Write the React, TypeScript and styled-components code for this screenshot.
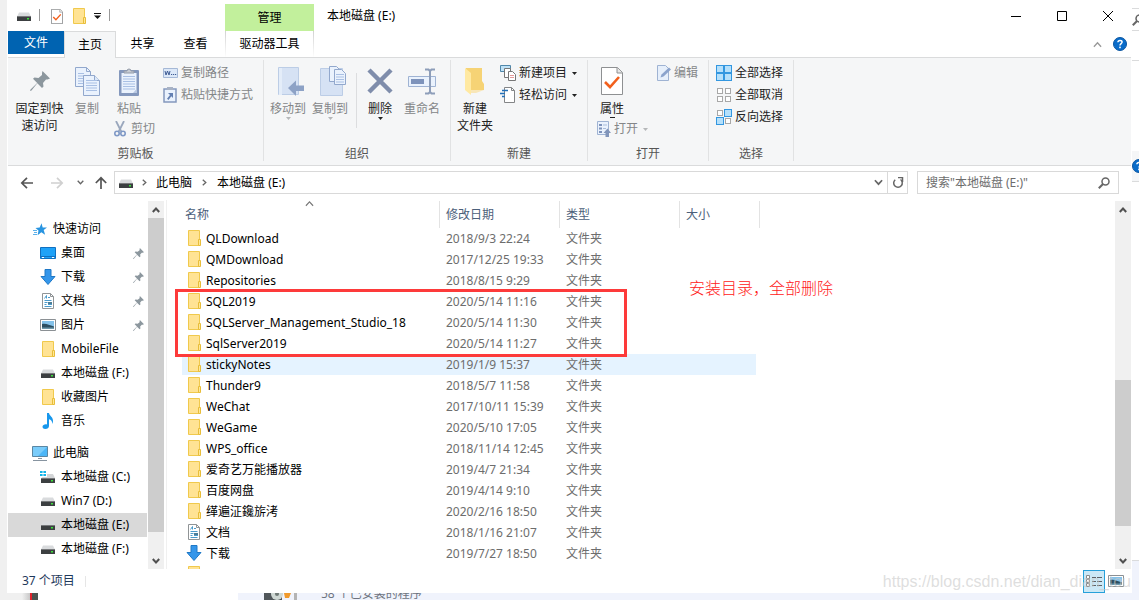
import React from "react";
import styled, { createGlobalStyle, css } from "styled-components";

const GlobalStyle = createGlobalStyle`
  * { box-sizing: border-box; }
  body {
    margin: 0;
    background: #fff;
    color: #000;
    font: 12px/16px "Noto Sans", "Noto Sans CJK SC", sans-serif;
  }
  button, input { font: inherit; color: inherit; }
  svg { display: block; flex: none; }
`;

const plainButton = css`
  border: 0;
  padding: 0;
  background: none;
  display: flex;
  align-items: center;
  white-space: nowrap;
`;

/* ---------- page frame ---------- */

const Desktop = styled.div`
  display: flex;
  flex-direction: column;
  height: 100vh;
  overflow: hidden;
`;

const Stage = styled.div`
  display: flex;
  flex: 1;
  min-height: 0;
`;

const LeftEdge = styled.div`
  width: 8px;
  flex: none;
  background: #f0f0f0;
  border-right: 1px solid #fff;
`;

const RightEdge = styled.div`
  width: 8px;
  flex: none;
  overflow: hidden;
  display: flex;
  flex-direction: column;
  border-left: 1px solid #fff;
`;

const EdgeBlock = styled.div<{ $h?: number; $bg?: string; $line?: boolean }>`
  height: ${(p) => (p.$h ? `${p.$h}px` : "auto")};
  flex: ${(p) => (p.$h ? "none" : 1)};
  background: ${(p) => p.$bg || "#fff"};
  border-bottom: ${(p) => (p.$line ? "1px solid #dadbdc" : "0")};
  overflow: hidden;
  display: flex;
  align-items: center;
`;

const Window = styled.div`
  flex: 1;
  min-width: 0;
  display: flex;
  flex-direction: column;
  position: relative;
  background: #fff;
`;

const Behind = styled.div`
  height: 7px;
  flex: none;
  display: flex;
  align-items: flex-end;
  overflow: hidden;
  background: #f0f0f0;
`;

const BehindLeft = styled.div`
  width: 238px;
  height: 7px;
  background: linear-gradient(90deg, #f0f0f0 22px, #c8c8c8 30px, #e0242c 30px, #e0242c 32px, #4a5450 32px, #4a5450 38px, #fff 38px);
`;

const BehindRight = styled.div`
  flex: 1;
  height: 7px;
  background: #f0f3fc;
  display: flex;
  align-items: flex-end;
  gap: 23px;
  padding-left: 25px;
  line-height: 12px;
  color: #6d7380;
`;

/* ---------- title bar and tabs ---------- */

const Header = styled.header`
  display: flex;
  height: 58px;
  border-bottom: 1px solid #dadbdc;
`;

const HeaderLeft = styled.div`
  width: 217px;
  display: flex;
  flex-direction: column;
`;

const QuickBar = styled.div`
  height: 31px;
  flex: none;
  display: flex;
  align-items: center;
  padding: 1px 0 0 9px;
`;

const QuickSep = styled.span`
  width: 1px;
  height: 12px;
  margin: 0 11px 2px 8px;
  background: #999;
`;

const QuickButton = styled.button<{ $w: number }>`
  ${plainButton}
  width: ${(p) => p.$w}px;
`;

const Tabs = styled.div`
  display: flex;
  flex: none;
  height: 27px;
`;

const Tab = styled.button<{ $kind?: "file" | "active" }>`
  ${plainButton}
  justify-content: center;
  width: 53px;
  height: 26px;
  ${(p) =>
    p.$kind === "file" &&
    css`
      width: 56px;
      height: 23px;
      background: #0063b1;
      color: #fff;
    `}
  ${(p) =>
    p.$kind === "active" &&
    css`
      width: 52px;
      height: 27px;
      background: #f5f6f7;
      border: 1px solid #dadbdc;
      border-bottom: 0;
    `}
`;

const ContextTab = styled.div`
  width: 89px;
  padding-top: 4px;
`;

const ContextTitle = styled.div`
  height: 27px;
  line-height: 28px;
  text-align: center;
  background: #c2f09c;
`;

const ContextButton = styled.button`
  ${plainButton}
  justify-content: center;
  width: 100%;
  height: 26px;
  border: solid;
  border-width: 0 1px;
  border-image: linear-gradient(#d0d0d0, #fff) 1;
`;

const HeaderRest = styled.div`
  flex: 1;
  display: flex;
  flex-direction: column;
`;

const TitleRow = styled.div`
  height: 31px;
  display: flex;
  align-items: center;
  justify-content: space-between;
  padding-left: 13px;
`;

const Title = styled.h1`
  margin: 0;
  font: inherit;
`;

const WindowButtons = styled.div`
  display: flex;
`;

const WindowButton = styled.button`
  ${plainButton}
  justify-content: center;
  width: 46px;
  height: 30px;
`;

const HelpRow = styled.div`
  display: flex;
  justify-content: flex-end;
  align-items: center;
  gap: 11px;
  height: 26px;
  padding-right: 4px;
`;

/* ---------- ribbon ---------- */

const Ribbon = styled.div`
  display: flex;
  height: 108px;
  background: #f5f6f7;
  border-bottom: 1px solid #dadbdc;
  color: #222;
`;

const Group = styled.section<{ $w: number }>`
  width: ${(p) => p.$w}px;
  margin: 2px 0 4px;
  flex: none;
  display: flex;
  flex-direction: column;
  border-right: 1px solid #e1e2e3;
`;

const GroupBody = styled.div<{ $pad?: number }>`
  flex: 1;
  display: flex;
  align-items: flex-start;
  padding-left: ${(p) => p.$pad ?? 3}px;
`;

const GroupLabel = styled.div`
  height: 15px;
  text-align: center;
  color: #555;
`;

const Column = styled.div<{ $left?: number }>`
  display: flex;
  flex-direction: column;
  margin-left: ${(p) => p.$left ?? 0}px;
  padding-top: 2px;
`;

const BigColumn = styled.div<{ $w: number }>`
  display: flex;
  flex-direction: column;
  width: ${(p) => p.$w}px;
`;

const BigButton = styled.button<{ $w?: number; $dim?: boolean; $short?: boolean }>`
  ${plainButton}
  flex-direction: column;
  justify-content: flex-start;
  width: ${(p) => p.$w ?? 42}px;
  height: ${(p) => (p.$short ? 58 : 78)}px;
  padding-top: 2px;
  line-height: 17px;
  color: ${(p) => (p.$dim ? "#848688" : "#222")};
`;

const IconBox = styled.span<{ $shift?: boolean }>`
  height: 38px;
  flex: none;
  display: flex;
  align-items: center;
  justify-content: center;
  padding-left: ${(p) => (p.$shift ? 6 : 0)}px;
`;

const Small = styled.button<{ $dim?: boolean; $gap?: number; $left?: number }>`
  ${plainButton}
  height: 22px;
  gap: ${(p) => p.$gap ?? 3}px;
  margin-left: ${(p) => p.$left ?? 0}px;
  color: ${(p) => (p.$dim ? "#848688" : "#222")};
`;

const MenuMark = styled.span`
  margin-left: 2px;
`;

const InnerSep = styled.span`
  width: 1px;
  height: 55px;
  margin: 13px 2px 0 5px;
  background: #dcdddf;
`;

/* ---------- address row ---------- */

const AddressRow = styled.div`
  display: flex;
  align-items: center;
  height: 34px;
  padding: 0 12px 1px;
`;

const NavButton = styled.button<{ $left?: number }>`
  ${plainButton}
  justify-content: center;
  width: 14px;
  height: 22px;
  margin-left: ${(p) => p.$left ?? 0}px;
`;

const AddressBox = styled.nav`
  flex: 1;
  display: flex;
  align-items: center;
  height: 23px;
  margin: 0 9px 0 6px;
  padding-left: 4px;
  border: 1px solid #d9d9d9;
`;

const Crumb = styled.a`
  color: #000;
  text-decoration: none;
  white-space: nowrap;
`;

const CrumbArrow = styled.span<{ $first?: boolean }>`
  width: ${(p) => (p.$first ? 23 : 25)}px;
  display: flex;
  justify-content: center;
`;

const AddressEnd = styled.div`
  margin-left: auto;
  display: flex;
  align-items: center;
  height: 21px;
`;

const AddressButton = styled.button<{ $line?: boolean }>`
  ${plainButton}
  justify-content: center;
  width: ${(p) => (p.$line ? 20 : 18)}px;
  height: 21px;
  border-left: ${(p) => (p.$line ? "1px solid #d9d9d9" : "0")};
`;

const SearchBox = styled.label`
  width: 202px;
  height: 23px;
  display: flex;
  align-items: center;
  padding: 0 8px;
  border: 1px solid #d9d9d9;
`;

const SearchInput = styled.input`
  flex: 1;
  min-width: 0;
  border: 0;
  padding: 0;
  outline: 0;
  background: none;
  &::placeholder { color: #6d6d6d; opacity: 1; }
`;

/* ---------- panes ---------- */

const Panes = styled.div`
  flex: 1;
  min-height: 0;
  display: flex;
`;

const Tree = styled.nav`
  width: 139px;
  margin-right: 1px;
  padding-top: 17px;
  flex: none;
  overflow: hidden;
`;

const TreeItem = styled.a<{ $root?: boolean; $selected?: boolean; $gap?: boolean }>`
  display: flex;
  align-items: center;
  height: 24px;
  margin-top: ${(p) => (p.$gap ? 8 : 0)}px;
  padding: 0 3px 0 ${(p) => (p.$root ? 24 : 32)}px;
  background: ${(p) => (p.$selected ? "#d9d9d9" : "transparent")};
  color: #000;
  text-decoration: none;
  white-space: nowrap;
`;

const TreeIcon = styled.span`
  width: 16px;
  margin-right: 5px;
  display: flex;
  justify-content: center;
`;

const PinSlot = styled.span`
  margin-left: auto;
`;

const Scroll = styled.div`
  width: 16px;
  margin-top: 1px;
  flex: none;
  display: flex;
  flex-direction: column;
  background: #f0f0f0;
`;

const ScrollButton = styled.button`
  ${plainButton}
  justify-content: center;
  height: 17px;
  flex: none;
`;

const ScrollPart = styled.div<{ $size: number; $thumb?: boolean }>`
  flex: ${(p) => p.$size} 1 0;
  background: ${(p) => (p.$thumb ? "#cdcdcd" : "transparent")};
`;

const FilePane = styled.main`
  flex: 1;
  min-width: 0;
  position: relative;
  overflow: hidden;
  margin-left: 2px;
  padding: 1px 0 0 15px;
  border-left: 1px solid #f0f0f0;
`;

const FileTable = styled.table`
  width: 578px;
  table-layout: fixed;
  border-collapse: separate;
  border-spacing: 0;
`;

const HeadCell = styled.th<{ $w: number; $pad?: number }>`
  width: ${(p) => p.$w}px;
  height: 27px;
  padding: 0 0 0 ${(p) => p.$pad ?? 6}px;
  border-right: 1px solid #e3e3e3;
  text-align: left;
  font-weight: 400;
  color: #4c607a;
  position: relative;
`;

const SortMark = styled.span`
  position: absolute;
  top: -2px;
  left: 123px;
`;

const FileRow = styled.tr<{ $hover?: boolean }>`
  td { background: ${(p) => (p.$hover ? "#e5f3ff" : "transparent")}; }
`;

const Cell = styled.td`
  height: 21px;
  padding: 0 0 0 6px;
  color: #6d6d6d;
  white-space: nowrap;
  &:last-child {
    border-right: 4px solid transparent;
    background-clip: padding-box;
  }
`;

const NameCell = styled(Cell)`
  color: #000;
`;

const NameLine = styled.div`
  display: flex;
  align-items: center;
  height: 21px;
`;

const FileIcon = styled.span`
  width: 12px;
  margin-right: 6px;
  padding-bottom: 1px;
  display: flex;
  justify-content: center;
`;

const RedFrame = styled.div`
  position: absolute;
  left: 8px;
  top: 89px;
  width: 452px;
  height: 68px;
  border: 3px solid #fd3a3a;
`;

const RedNote = styled.p`
  position: absolute;
  left: 522px;
  top: 76px;
  margin: 0;
  font-size: 16px;
  line-height: 24px;
  font-weight: 300;
  color: #ff2020;
`;

const StatusBar = styled.footer`
  height: 24px;
  display: flex;
  align-items: center;
  padding: 0 4px 0 14px;
  color: #1e395b;
`;

const StatusSep = styled.span`
  width: 1px;
  height: 11px;
  margin-left: 10px;
  background: #e6e6e6;
`;

const ViewButtons = styled.div`
  margin-left: auto;
  display: flex;
  align-items: center;
`;

const ViewButton = styled.button<{ $on?: boolean }>`
  ${plainButton}
  justify-content: center;
  width: 22px;
  height: 23px;
  border: ${(p) => (p.$on ? "1px solid #26a0da" : "0")};
  background: ${(p) => (p.$on ? "#cbe8f6" : "none")};
`;

const Watermark = styled.div`
  position: absolute;
  right: 0;
  bottom: 2px;
  font: 16px/18px "Liberation Sans", sans-serif;
  color: rgba(200, 200, 200, 0.6);
  pointer-events: none;
`;

/* ---------- icons ---------- */

const Drive = () => (
  <svg width="14" height="12" viewBox="0 0 14 12">
    <path d="M2 2.500h10l2 4H0z" fill="#d9dbdd" />
    <path d="M0 6h14v5H0z" fill="#3c3f41" />
    <path d="M0 6h14v1H0z" fill="#77797b" />
    <rect x="10" y="8" width="2" height="1.500" fill="#3be03b" />
  </svg>
);

const SystemDrive = () => (
  <svg width="16" height="14" viewBox="0 0 16 14">
    <path d="M0 1h2.600v2H0zM3.400 1H6v2H3.400zM0 4h2.600v2H0zM3.400 4H6v2H3.400z" fill="#12b4e8" />
    <path d="M7 4h6l2 4H1.500l1-1H7z" fill="#d3d5d7" />
    <path d="M1 8h14v5H1z" fill="#3c3f41" />
    <path d="M1 8h14v1H1z" fill="#77797b" />
    <rect x="11" y="10" width="2" height="1.500" fill="#3be03b" />
  </svg>
);

const Folder = () => (
  <svg width="13" height="16" viewBox="0 0 13 16">
    <path d="M.5.5h11v15H.5z" fill="#ffe394" stroke="#f0c94c" />
    <path d="M10.500 9.500h2v6h-2z" fill="#ffe896" stroke="#e8bd3a" />
  </svg>
);

const CheckPage = ({ big }: { big?: boolean }) => (
  <svg width={big ? 22 : 12} height={big ? 28 : 15} viewBox="0 0 22 28">
    <path d="M.5.5h16l5 5v22H.5z" fill="#fff" stroke="#8e9092" strokeWidth={big ? 1 : 1.8} />
    <path d="M16 .5v5.500h5.500" fill="#e6e6e6" stroke="#8e9092" />
    <path d="M4 15l5 5 9-10" fill="none" stroke="#f2601d" strokeWidth="2.600" />
  </svg>
);

const Pushpin = ({ size }: { size: number }) => (
  <svg width={size} height={size} viewBox="0 0 20 20">
    <path d="M12.500 0L20 7.500l-2.500 1-1.500 0-3 3.500.5 3.500L12 17l-4.700-4.700L1.500 19.500 0 20l.5-1.500L7.200 12 3 7.800 4.500 6.500 8.500 7 12 4V2z" fill="#8c979e" />
  </svg>
);

const SheetLines = ({ x, y, n, w }: { x: number; y: number; n: number; w: number }) => (
  <>
    {Array.from({ length: n }, (_, i) => (
      <path key={i} d={`M${x} ${y + i * 2.500 + 0.500}h${w}`} stroke="#a9c0e4" />
    ))}
  </>
);

const CopyPages = () => (
  <svg width="25" height="29" viewBox="0 0 25 29">
    <path d="M.5.5h11l4 4v15H.5z" fill="#eaf2fd" stroke="#92a8cd" />
    <path d="M11.500.5v4h4" fill="none" stroke="#92a8cd" />
    <SheetLines x={3} y={6} n={5} w={6} />
    <path d="M8.500 8.500h11l5 5v15h-16z" fill="#eaf2fd" stroke="#92a8cd" />
    <path d="M19.500 8.500v5h5" fill="#dce8f8" stroke="#92a8cd" />
    <SheetLines x={11} y={13} n={5} w={11} />
  </svg>
);

const Clipboard = () => (
  <svg width="20" height="29" viewBox="0 0 20 29">
    <rect x="0" y="3" width="20" height="26" rx="1" fill="#8498bd" />
    <path d="M2.500 6h15v20h-15z" fill="#eaf2fd" />
    <path d="M5 6V4h3a2 2 0 0 1 4 0h3v2z" fill="#c6cbd3" stroke="#929aa8" />
    <SheetLines x={4} y={9} n={6} w={12} />
    <path d="M14 26l3.500-4v4z" fill="#b9c9e3" />
  </svg>
);

const PathIcon = () => (
  <svg width="15" height="10" viewBox="0 0 15 10">
    <path d="M.5.5h14v9H.5z" fill="#dce8f8" stroke="#a5b8d6" />
    <path d="M2 3l1 4 1.500-4L6 7l1-4" fill="none" stroke="#3f5c94" />
    <path d="M8 6.500h1.200M10 6.500h1.200M12 6.500h1.200" stroke="#3f5c94" />
  </svg>
);

const ShortcutIcon = () => (
  <svg width="14" height="16" viewBox="0 0 14 16">
    <path d="M1 2h12v13H1z" fill="#eaf2fd" stroke="#8498bd" strokeWidth="1.500" />
    <path d="M4 0h6v3H4z" fill="#a8b2c4" />
    <path d="M5 6h5v5L8.300 9.300 5.500 13 4 11.700 7 8z" fill="#6480b2" />
  </svg>
);

const Scissors = () => (
  <svg width="12" height="16" viewBox="0 0 12 16" fill="none">
    <path d="M2 0l5.500 11M10 0L4.500 11" stroke="#9aa7bd" strokeWidth="1.800" />
    <circle cx="3" cy="12.500" r="2.200" stroke="#7f99c6" strokeWidth="1.600" />
    <circle cx="9" cy="12.500" r="2.200" stroke="#7f99c6" strokeWidth="1.600" />
  </svg>
);

const MoveTo = () => (
  <svg width="26" height="29" viewBox="0 0 26 29">
    <path d="M.5.5h20v27H.5z" fill="#d6e2f4" stroke="#bccde6" />
    <path d="M1 1h3v27H1z" fill="#e4edf9" />
    <path d="M10 21l8-7.500v5h8v5.500h-8v5z" fill="#8da2c6" />
  </svg>
);

const CopyTo = () => (
  <svg width="26" height="30" viewBox="0 0 26 30">
    <path d="M.5 2.500h22v27H.5z" fill="#d6e2f4" stroke="#bccde6" />
    <path d="M9.500.5h7l3 3v12h-10z" fill="#eaf2fd" stroke="#92a8cd" />
    <path d="M14.500 3.500h7l4 4v11h-11z" fill="#eaf2fd" stroke="#92a8cd" />
    <SheetLines x={16} y={8} n={4} w={8} />
  </svg>
);

const Cross = () => (
  <svg width="26" height="26" viewBox="0 0 26 26">
    <path d="M2 2l22 22M24 2L2 24" stroke="#7f8dab" strokeWidth="4.500" />
  </svg>
);

const Rename = () => (
  <svg width="28" height="27" viewBox="0 0 28 27">
    <path d="M.5 8.500h27v10H.5z" fill="#eaf2fd" stroke="#9fb3d3" />
    <path d="M3 11h13v5H3z" fill="#7e93bb" />
    <path d="M17 1.500h3.500l1.500 1.500 1.500-1.500H27M17 25.500h3.500L22 24l1.500 1.500H27M22 2v23" fill="none" stroke="#8d9db9" strokeWidth="2" />
  </svg>
);

const BigFolder = () => (
  <svg width="20" height="28" viewBox="0 0 20 28">
    <path d="M1 1h16v13l2 3v6H1z" fill="#f6d375" />
    <path d="M0 1l6 5v22l-6-5z" fill="#ffe9a2" />
    <path d="M6 23h13l-8 3H6z" fill="#f8e6b8" />
  </svg>
);

const NewItem = () => (
  <svg width="16" height="16" viewBox="0 0 16 16">
    <path d="M.5.5h10v6H.5z" fill="#bfe2f7" stroke="#4f87aa" />
    <path d="M4.500 3.500h6v9h-6z" fill="#fff" stroke="#777" />
    <path d="M8.500 6.500h4l3 3v6h-7z" fill="#fff" stroke="#777" />
    <path d="M10 10.500h4M10 12.500h4" stroke="#e59b9b" />
  </svg>
);

const EasyAccess = () => (
  <svg width="16" height="16" viewBox="0 0 16 16">
    <path d="M4.500.5h7l3 3v12h-10z" fill="#fff" stroke="#838587" />
    <path d="M11.500.5v3h3" fill="none" stroke="#838587" />
    <path d="M2 3.500h6M0 6.500h5M2 9.500h3" stroke="#2370b8" strokeWidth="1.500" />
  </svg>
);

const OpenIcon = () => (
  <svg width="14" height="16" viewBox="0 0 14 16">
    <path d="M.5.5h11v13H.5z" fill="#eaf2fd" stroke="#9fb3d3" />
    <path d="M2 3h3v2H2zM2 6.500h3v2H2zM2 10h3v2H2z" fill="#7e93bb" />
    <path d="M6 4h4M6 7.500h3" stroke="#a9bddc" />
    <path d="M8.500 16v-4H6.500L10.500 7.500 14 12h-2v4z" fill="#8195ba" />
  </svg>
);

const EditIcon = () => (
  <svg width="14" height="16" viewBox="0 0 14 16">
    <path d="M.5.5h8l3 3v12H.5z" fill="#e6effb" stroke="#9fb3d3" />
    <path d="M3.500 12.500l1-3L12 2.500l2 2-7.500 7z" fill="#8ba3cc" />
  </svg>
);

const Tiles = ({ fill }: { fill: boolean[] }) => (
  <svg width="16" height="16" viewBox="0 0 16 16">
    {fill.map((on, i) => {
      const x = (i % 2) * 8;
      const y = Math.floor(i / 2) * 8;
      return on ? (
        <rect key={i} x={x + 0.500} y={y + 0.500} width="7" height="7" fill="#b5e0fb" stroke="#3397e0" />
      ) : (
        <rect key={i} x={x + 1.500} y={y + 1.500} width="5" height="5" fill="#fff" stroke="#a8a8a8" />
      );
    })}
  </svg>
);

const Triangle = ({ color = "#222" }: { color?: string }) => (
  <svg width="5" height="3" viewBox="0 0 5 3">
    <path d="M0 0h5L2.500 3z" fill={color} />
  </svg>
);

const TriangleTop = () => (
  <svg width="5" height="1" viewBox="0 0 5 1">
    <path d="M0 0h5v1H0z" fill="#222" />
  </svg>
);

const Chevron = ({ turn, w = 8, color = "#666", bold = 1.5 }: { turn: number; w?: number; color?: string; bold?: number }) => (
  <svg width={w} height={w} viewBox="0 0 8 8">
    <path d="M.8 6L4 2.500 7.200 6" fill="none" stroke={color} strokeWidth={bold} transform={`rotate(${turn} 4 4)`} />
  </svg>
);

const Arrow = ({ turn, color }: { turn: number; color: string }) => (
  <svg width="14" height="14" viewBox="0 0 14 14">
    <path d="M13 7H2M7 1.800L1.800 7 7 12.200" fill="none" stroke={color} strokeWidth="1.700" transform={`rotate(${turn} 7 7)`} />
  </svg>
);

const Magnifier = () => (
  <svg width="12" height="12" viewBox="0 0 12 12" fill="none">
    <circle cx="7.500" cy="4.500" r="3.500" stroke="#666" strokeWidth="1.500" />
    <path d="M5 7L.8 11.200" stroke="#666" strokeWidth="2" />
  </svg>
);

const Help = () => (
  <svg width="14" height="14" viewBox="0 0 14 14">
    <circle cx="7" cy="7" r="6.500" fill="#0a6cc9" stroke="#0a55a0" />
    <path d="M4.900 5.300C5 2.700 9.100 2.900 9.100 5.100 9.100 6.700 7 6.700 7 8.500" fill="none" stroke="#fff" strokeWidth="1.500" />
    <rect x="6.200" y="9.600" width="1.600" height="1.600" fill="#fff" />
  </svg>
);

const Star = () => (
  <svg width="14" height="13" viewBox="0 0 14 13">
    <path d="M8.500.3l1.200 4.200H14l-3.300 2.600 1.400 4.700-3.800-2.500-3.700 3 .9-4.800L2.500 5l4.200-.4z" fill="#2894e0" />
    <path d="M0 7.500h4M1 9.500h3M0 11.500h4" stroke="#5bb0ea" />
  </svg>
);

const DesktopIcon = () => (
  <svg width="16" height="12" viewBox="0 0 16 12">
    <path d="M.5.5h15v11H.5z" fill="#1ea2f8" stroke="#1170c0" />
    <path d="M1 9.500h14" stroke="#1170c0" />
    <path d="M2 10.500h2M12 10.500h2" stroke="#fff" />
  </svg>
);

const Download = () => (
  <svg width="16" height="16" viewBox="0 0 16 16">
    <path d="M5 .5h6v7h4L8 15.500 1 7.500h4z" fill="#3496ea" stroke="#1f78c6" />
  </svg>
);

const DocIcon = () => (
  <svg width="12" height="16" viewBox="0 0 12 16">
    <path d="M.5.5h8l3 3v12H.5z" fill="#fff" stroke="#909496" />
    <path d="M8.500.5v3h3" fill="none" stroke="#909496" />
    <path d="M2.500 5.500l2-3v3M6 4.500h2M2.500 7.500h7M2.500 9.500h3M6 11.500h4M2.500 11.500h2M2.500 13.500h7" fill="none" stroke="#4b9bcb" />
    <path d="M6 9h4v2H6z" fill="#4d7d96" />
  </svg>
);

const PictureIcon = () => (
  <svg width="16" height="12" viewBox="0 0 16 12">
    <path d="M.5.5h15v11H.5z" fill="#fff" stroke="#8b9094" />
    <path d="M2 2h12v8H2z" fill="#84c2ea" />
    <path d="M2 5c4-1 7 1 12 2.500V10H2z" fill="#2c4f63" />
    <path d="M2 8.500h12V10H2z" fill="#6d98ab" />
  </svg>
);

const Music = () => (
  <svg width="12" height="16" viewBox="0 0 12 16">
    <path d="M5 0h2c.3 3 4.500 4 4 8.500-.1 1-.5 1.800-1 2.500.5-3-1-4.200-3-4.800V13c0 1.800-1.600 3-3.700 3C1.200 16 .5 15 .5 13.800c0-1.700 2.500-3 4.500-2.300z" fill="#1797ec" />
  </svg>
);

const Computer = () => (
  <svg width="16" height="15" viewBox="0 0 16 15">
    <path d="M.5.5h15v10H.5z" fill="#4cb6f7" stroke="#5b87a3" />
    <path d="M1 1h14L6 10H1z" fill="#7accfa" />
    <path d="M6 12.500h4M1 14.500h14" stroke="#8794a0" />
  </svg>
);

const Refresh = () => (
  <svg width="12" height="12" viewBox="0 0 12 12">
    <path d="M3.200 2.700A4.300 4.300 0 1 0 8.500 2.500" fill="none" stroke="#666" strokeWidth="1.500" />
    <path d="M6 .5h4.500V5" fill="none" stroke="#666" strokeWidth="1.500" />
  </svg>
);

const DetailsIcon = () => (
  <svg width="16" height="13" viewBox="0 0 16 13">
    <path d="M.5.5h3v3h-3zM.5 4.500h3v3h-3zM.5 8.500h3v3h-3z" fill="#fff" stroke="#8a8a8a" />
    <path d="M6 2.500h4M11 2.500h5M6 6.500h4M11 6.500h5M6 10.500h4M11 10.500h5" stroke="#5c6166" />
  </svg>
);

const DiscIcon = () => (
  <svg width="35" height="14" viewBox="0 0 35 14">
    <path d="M1 7h18v7H1z" fill="#50565a" />
    <circle cx="14" cy="8" r="6" fill="#cfd8d4" />
    <circle cx="14" cy="8" r="2" fill="#707a76" />
    <path d="M21 7h7l-2 5h-4z" fill="#f09a2c" />
    <path d="M31 7h3v7h-3z" fill="#b4b4b4" />
  </svg>
);

/* ---------- data ---------- */

const files: [string, string, React.ReactNode?][] = [
  ["QLDownload", "2018/9/3 22:24"],
  ["QMDownload", "2017/12/25 19:33"],
  ["Repositories", "2018/8/15 9:29"],
  ["SQL2019", "2020/5/14 11:16"],
  ["SQLServer_Management_Studio_18", "2020/5/14 11:30"],
  ["SqlServer2019", "2020/5/14 11:27"],
  ["stickyNotes", "2019/1/9 15:37"],
  ["Thunder9", "2018/5/7 11:58"],
  ["WeChat", "2017/10/11 15:39"],
  ["WeGame", "2020/5/10 17:05"],
  ["WPS_office", "2018/11/14 12:45"],
  ["爱奇艺万能播放器", "2019/4/7 21:34"],
  ["百度网盘", "2019/4/14 9:10"],
  ["缂遍泟鑱旂洘", "2020/2/16 18:50"],
  ["文档", "2018/1/16 21:07", <DocIcon />],
  ["下载", "2019/7/27 18:50", <Download />],
  ["", ""],
];

const tree: { name: string; icon: React.ReactNode; root?: boolean; pin?: boolean; gap?: boolean; selected?: boolean }[] = [
  { name: "快速访问", icon: <Star />, root: true },
  { name: "桌面", icon: <DesktopIcon />, pin: true },
  { name: "下载", icon: <Download />, pin: true },
  { name: "文档", icon: <DocIcon />, pin: true },
  { name: "图片", icon: <PictureIcon />, pin: true },
  { name: "MobileFile", icon: <Folder /> },
  { name: "本地磁盘 (F:)", icon: <Drive /> },
  { name: "收藏图片", icon: <Folder /> },
  { name: "音乐", icon: <Music /> },
  { name: "此电脑", icon: <Computer />, root: true, gap: true },
  { name: "本地磁盘 (C:)", icon: <SystemDrive /> },
  { name: "Win7 (D:)", icon: <Drive /> },
  { name: "本地磁盘 (E:)", icon: <Drive />, selected: true },
  { name: "本地磁盘 (F:)", icon: <Drive /> },
];

const ScrollBar = ({ parts }: { parts: [number, number, number] }) => (
  <Scroll>
    <ScrollButton aria-label="向上滚动"><Chevron turn={0} w={8} color="#505050" bold={2} /></ScrollButton>
    <ScrollPart $size={parts[0]} />
    <ScrollPart $size={parts[1]} $thumb />
    <ScrollPart $size={parts[2]} />
    <ScrollButton aria-label="向下滚动"><Chevron turn={180} w={8} color="#505050" bold={2} /></ScrollButton>
  </Scroll>
);

export default function App() {
  return (
    <Desktop>
      <GlobalStyle />
      <Stage>
        <LeftEdge />
        <Window>
          <Header>
            <HeaderLeft>
              <QuickBar>
                <QuickButton $w={14} aria-label="驱动器"><Drive /></QuickButton>
                <QuickSep />
                <QuickButton $w={22} aria-label="属性"><CheckPage /></QuickButton>
                <QuickButton $w={21} aria-label="新建文件夹"><Folder /></QuickButton>
                <QuickButton $w={7} aria-label="自定义快速访问工具栏">
                  <svg width="7" height="6" viewBox="0 0 7 6"><path d="M0 .5h7" stroke="#111" /><path d="M0 2.500h7L3.500 6z" fill="#111" /></svg>
                </QuickButton>
                <QuickSep />
              </QuickBar>
              <Tabs>
                <Tab $kind="file">文件</Tab>
                <Tab $kind="active">主页</Tab>
                <Tab>共享</Tab>
                <Tab>查看</Tab>
              </Tabs>
            </HeaderLeft>
            <ContextTab>
              <ContextTitle>管理</ContextTitle>
              <ContextButton>驱动器工具</ContextButton>
            </ContextTab>
            <HeaderRest>
              <TitleRow>
                <Title>本地磁盘 (E:)</Title>
                <WindowButtons>
                  <WindowButton aria-label="最小化"><svg width="10" height="10"><path d="M0 5.500h10" stroke="#000" /></svg></WindowButton>
                  <WindowButton aria-label="最大化"><svg width="10" height="10"><path d="M.5.5h9v9h-9z" fill="none" stroke="#000" /></svg></WindowButton>
                  <WindowButton aria-label="关闭"><svg width="10" height="10"><path d="M0 0l10 10M10 0L0 10" stroke="#000" /></svg></WindowButton>
                </WindowButtons>
              </TitleRow>
              <HelpRow>
                <Chevron turn={0} w={9} color="#999" bold={1.2} />
                <Help />
              </HelpRow>
            </HeaderRest>
          </Header>

          <Ribbon>
            <Group $w={256}>
              <GroupBody>
                <BigButton $w={57}><IconBox><Pushpin size={20} /></IconBox>固定到快<br />速访问</BigButton>
                <BigButton $w={38} $dim><IconBox><CopyPages /></IconBox>复制</BigButton>
                <BigColumn $w={57}>
                  <BigButton $w={46} $dim $short><IconBox><Clipboard /></IconBox>粘贴</BigButton>
                  <Small $dim $left={8} $gap={5}><Scissors />剪切</Small>
                </BigColumn>
                <Column>
                  <Small $dim><PathIcon />复制路径</Small>
                  <Small $dim $gap={4}><ShortcutIcon />粘贴快捷方式</Small>
                </Column>
              </GroupBody>
              <GroupLabel>剪贴板</GroupLabel>
            </Group>
            <Group $w={187}>
              <GroupBody>
                <BigButton $dim><IconBox $shift><MoveTo /></IconBox>移动到<Triangle color="#b5b7b9" /></BigButton>
                <BigButton $dim><IconBox $shift><CopyTo /></IconBox>复制到<Triangle color="#b5b7b9" /></BigButton>
                <InnerSep />
                <BigButton><IconBox><Cross /></IconBox>删除<Triangle /></BigButton>
                <BigButton $dim><IconBox><Rename /></IconBox>重命名</BigButton>
              </GroupBody>
              <GroupLabel>组织</GroupLabel>
            </Group>
            <Group $w={137}>
              <GroupBody>
                <BigButton><IconBox><BigFolder /></IconBox>新建<br />文件夹</BigButton>
                <Column $left={4}>
                  <Small><NewItem />新建项目<MenuMark><Triangle /></MenuMark></Small>
                  <Small><EasyAccess />轻松访问<MenuMark><Triangle /></MenuMark></Small>
                </Column>
              </GroupBody>
              <GroupLabel>新建</GroupLabel>
            </Group>
            <Group $w={121}>
              <GroupBody>
                <BigColumn $w={66}>
                  <BigButton $short><IconBox><CheckPage big /></IconBox>属性<TriangleTop /></BigButton>
                  <Small $dim $left={6}><OpenIcon />打开<MenuMark><Triangle color="#b5b7b9" /></MenuMark></Small>
                </BigColumn>
                <Column>
                  <Small $dim><EditIcon />编辑</Small>
                </Column>
              </GroupBody>
              <GroupLabel>打开</GroupLabel>
            </Group>
            <Group $w={85}>
              <GroupBody $pad={7}>
                <Column>
                  <Small><Tiles fill={[true, true, true, true]} />全部选择</Small>
                  <Small><Tiles fill={[false, false, false, false]} />全部取消</Small>
                  <Small><Tiles fill={[false, true, true, false]} />反向选择</Small>
                </Column>
              </GroupBody>
              <GroupLabel>选择</GroupLabel>
            </Group>
          </Ribbon>

          <AddressRow>
            <NavButton aria-label="后退"><Arrow turn={0} color="#555" /></NavButton>
            <NavButton $left={16} aria-label="前进"><Arrow turn={180} color="#d0d0d0" /></NavButton>
            <NavButton $left={9} aria-label="最近位置"><Chevron turn={180} w={7} /></NavButton>
            <NavButton $left={7} aria-label="上移"><Arrow turn={90} color="#555" /></NavButton>
            <AddressBox aria-label="地址">
              <Drive />
              <CrumbArrow $first><Chevron turn={90} w={7} /></CrumbArrow>
              <Crumb href="#pc">此电脑</Crumb>
              <CrumbArrow><Chevron turn={90} w={7} /></CrumbArrow>
              <Crumb href="#e">本地磁盘 (E:)</Crumb>
              <AddressEnd>
                <AddressButton aria-label="历史"><Chevron turn={180} w={9} /></AddressButton>
                <AddressButton $line aria-label="刷新"><Refresh /></AddressButton>
              </AddressEnd>
            </AddressBox>
            <SearchBox>
              <SearchInput type="text" aria-label="搜索" placeholder={'搜索"本地磁盘 (E:)"'} />
              <Magnifier />
            </SearchBox>
          </AddressRow>

          <Panes>
            <Tree aria-label="导航窗格">
              {tree.map((t, i) => (
                <TreeItem key={i} href="#" $root={t.root} $gap={t.gap} $selected={t.selected}>
                  <TreeIcon>{t.icon}</TreeIcon>
                  {t.name}
                  {t.pin && <PinSlot><Pushpin size={11} /></PinSlot>}
                </TreeItem>
              ))}
            </Tree>
            <ScrollBar parts={[0, 314, 20]} />
            <FilePane>
              <FileTable>
                <thead>
                  <tr>
                    <HeadCell $w={258} $pad={3}>
                      名称
                      <SortMark><Chevron turn={0} w={9} color="#777" bold={1} /></SortMark>
                    </HeadCell>
                    <HeadCell $w={120}>修改日期</HeadCell>
                    <HeadCell $w={120}>类型</HeadCell>
                    <HeadCell $w={80}>大小</HeadCell>
                  </tr>
                </thead>
                <tbody>
                  {files.map(([name, date, icon], i) => (
                    <FileRow key={i} $hover={name === "stickyNotes"}>
                      <NameCell>
                        <NameLine><FileIcon>{icon ?? <Folder />}</FileIcon>{name}</NameLine>
                      </NameCell>
                      <Cell>{date}</Cell>
                      <Cell>{name && "文件夹"}</Cell>
                      <Cell />
                    </FileRow>
                  ))}
                </tbody>
              </FileTable>
              <RedFrame />
              <RedNote>安装目录，全部删除</RedNote>
            </FilePane>
            <ScrollBar parts={[162, 146, 26]} />
          </Panes>

          <StatusBar>
            37 个项目
            <StatusSep />
            <ViewButtons>
              <ViewButton $on aria-label="详细信息"><DetailsIcon /></ViewButton>
              <ViewButton aria-label="大图标"><PictureIcon /></ViewButton>
            </ViewButtons>
          </StatusBar>
          <Watermark>https://blog.csdn.net/dian_dian_tou</Watermark>
        </Window>
        <RightEdge>
          <EdgeBlock $h={9} $line />
          <EdgeBlock $h={22} $line><Magnifier /></EdgeBlock>
          <EdgeBlock $h={30} $line />
          <EdgeBlock $h={90} />
          <EdgeBlock $h={31} $bg="#f5f6f7" $line><Help /></EdgeBlock>
          <EdgeBlock $line />
          <EdgeBlock $h={32} $bg="#f0f3fc" />
        </RightEdge>
      </Stage>
      <Behind>
        <BehindLeft />
        <BehindRight><DiscIcon />58 个已安装的程序</BehindRight>
      </Behind>
    </Desktop>
  );
}
